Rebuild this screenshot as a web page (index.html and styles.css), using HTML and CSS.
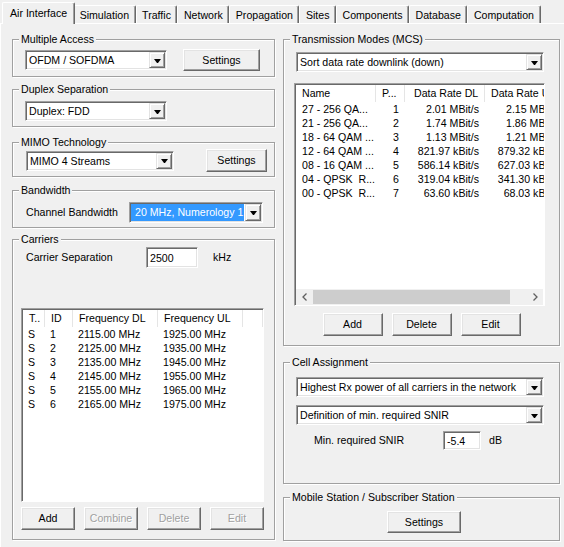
FILE: index.html
```html
<!DOCTYPE html>
<html lang="en">
 <head>
   <title>Air Interface</title>
   <meta charset="utf-8">
   <link rel="stylesheet" href="styles.css">
 </head>
 <body>
  <div class="tabs">
    <div class="tab active">Air Interface</div>
    <div class="tab">Simulation</div>
    <div class="tab">Traffic</div>
    <div class="tab">Network</div>
    <div class="tab">Propagation</div>
    <div class="tab">Sites</div>
    <div class="tab">Components</div>
    <div class="tab">Database</div>
    <div class="tab">Computation</div>
  </div>

  <div class="page">
    <div class="col col-left">

      <div class="group g-access">
        <div class="group-title">Multiple Access</div>
        <div class="row row-access">
          <div class="combo w-access"><span class="combo-text">OFDM / SOFDMA</span><span class="combo-btn"><i></i></span></div>
          <button class="btn btn-access">Settings</button>
        </div>
      </div>

      <div class="group g-duplex">
        <div class="group-title">Duplex Separation</div>
        <div class="row row-duplex">
          <div class="combo w-access"><span class="combo-text">Duplex: FDD</span><span class="combo-btn"><i></i></span></div>
        </div>
      </div>

      <div class="group g-mimo">
        <div class="group-title">MIMO Technology</div>
        <div class="row row-mimo">
          <div class="combo w-mimo"><span class="combo-text">MIMO 4 Streams</span><span class="combo-btn"><i></i></span></div>
          <button class="btn btn-mimo">Settings</button>
        </div>
      </div>

      <div class="group g-band">
        <div class="group-title">Bandwidth</div>
        <div class="row row-band">
          <span class="label w-band">Channel Bandwidth</span>
          <div class="combo w-bandcombo"><span class="combo-text selected">20 MHz, Numerology 1</span><span class="combo-btn"><i></i></span></div>
        </div>
      </div>

      <div class="group g-carriers">
        <div class="group-title">Carriers</div>
        <div class="row row-sep">
          <span class="label w-sep">Carrier Separation</span>
          <div class="edit w-sepedit">2500</div>
          <span class="unit">kHz</span>
        </div>

        <div class="list list-carriers">
          <div class="list-head">
            <span>T..</span><span>ID</span><span>Frequency DL</span><span>Frequency UL</span><span></span>
          </div>
          <div class="list-row"><span>S</span><span>1</span><span>2115.00 MHz</span><span>1925.00 MHz</span></div>
          <div class="list-row"><span>S</span><span>2</span><span>2125.00 MHz</span><span>1935.00 MHz</span></div>
          <div class="list-row"><span>S</span><span>3</span><span>2135.00 MHz</span><span>1945.00 MHz</span></div>
          <div class="list-row"><span>S</span><span>4</span><span>2145.00 MHz</span><span>1955.00 MHz</span></div>
          <div class="list-row"><span>S</span><span>5</span><span>2155.00 MHz</span><span>1965.00 MHz</span></div>
          <div class="list-row"><span>S</span><span>6</span><span>2165.00 MHz</span><span>1975.00 MHz</span></div>
        </div>

        <div class="row row-carrier-btns">
          <button class="btn btn-small">Add</button>
          <button class="btn btn-small disabled">Combine</button>
          <button class="btn btn-small disabled">Delete</button>
          <button class="btn btn-small disabled">Edit</button>
        </div>
      </div>

    </div>

    <div class="col col-right">

      <div class="group g-modes">
        <div class="group-title">Transmission Modes (MCS)</div>
        <div class="row row-sort">
          <div class="combo w-wide"><span class="combo-text">Sort data rate downlink (down)</span><span class="combo-btn"><i></i></span></div>
        </div>

        <div class="list list-modes">
          <div class="list-body">
            <div class="list-head">
              <span>Name</span><span>P...</span><span class="r">Data Rate DL</span><span>Data Rate UL</span>
            </div>
            <div class="list-row"><span>27 - 256 QA...</span><span class="r">1</span><span class="r">2.01 MBit/s</span><span class="r">2.15 MBit/s</span></div>
            <div class="list-row"><span>21 - 256 QA...</span><span class="r">2</span><span class="r">1.74 MBit/s</span><span class="r">1.86 MBit/s</span></div>
            <div class="list-row"><span>18 - 64 QAM ...</span><span class="r">3</span><span class="r">1.13 MBit/s</span><span class="r">1.21 MBit/s</span></div>
            <div class="list-row"><span>12 - 64 QAM ...</span><span class="r">4</span><span class="r">821.97 kBit/s</span><span class="r">879.32 kBit/s</span></div>
            <div class="list-row"><span>08 - 16 QAM ...</span><span class="r">5</span><span class="r">586.14 kBit/s</span><span class="r">627.03 kBit/s</span></div>
            <div class="list-row"><span>04 - QPSK&nbsp; R...</span><span class="r">6</span><span class="r">319.04 kBit/s</span><span class="r">341.30 kBit/s</span></div>
            <div class="list-row"><span>00 - QPSK&nbsp; R...</span><span class="r">7</span><span class="r">63.60 kBit/s</span><span class="r">68.03 kBit/s</span></div>
          </div>
          <div class="hscroll">
            <span class="arrow"><svg width="8" height="8" viewBox="0 0 8 8"><path d="M5.5 0.5 L2 4 L5.5 7.5" fill="none" stroke="#606060" stroke-width="1.3"/></svg></span>
            <span class="track"><span class="thumb"></span></span>
            <span class="arrow"><svg width="8" height="8" viewBox="0 0 8 8"><path d="M2.5 0.5 L6 4 L2.5 7.5" fill="none" stroke="#606060" stroke-width="1.3"/></svg></span>
          </div>
        </div>

        <div class="row row-mode-btns">
          <button class="btn btn-mode">Add</button>
          <button class="btn btn-mode">Delete</button>
          <button class="btn btn-mode">Edit</button>
        </div>
      </div>

      <div class="group g-cell">
        <div class="group-title">Cell Assignment</div>
        <div class="row row-cell1">
          <div class="combo w-wide"><span class="combo-text">Highest Rx power of all carriers in the network</span><span class="combo-btn"><i></i></span></div>
        </div>
        <div class="row row-cell2">
          <div class="combo w-wide"><span class="combo-text">Definition of min. required SNIR</span><span class="combo-btn"><i></i></span></div>
        </div>
        <div class="row row-snir">
          <span class="label w-snir">Min. required SNIR</span>
          <div class="edit w-snirEdit">-5.4</div>
          <span class="unit unit-db">dB</span>
        </div>
      </div>

      <div class="group g-mobile">
        <div class="group-title">Mobile Station / Subscriber Station</div>
        <div class="row row-mobile">
          <button class="btn btn-mobile">Settings</button>
        </div>
      </div>

    </div>
  </div>
 </body>
</html>
```

FILE: styles.css
```css
* {
  box-sizing: border-box;
}

html, body {
  margin: 0;
  padding: 0;
}

body {
  width: 564px;
  height: 547px;
  overflow: hidden;
  background-color: #f0f0f0;
  font-family: "Liberation Sans", Arial, sans-serif;
  font-size: 10.6px;
  line-height: 13px;
  color: #000;
}

/* tab strip */
.tabs {
  display: flex;
  align-items: flex-end;
  height: 23px;
  padding-left: 4px;
}

.tab {
  height: 18px;
  padding: 3px 5.5px 0;
  border-top: 1px solid #fff;
  border-left: 1px solid #fff;
  border-right: 1px solid #696969;
  box-shadow: inset -1px 0 #a0a0a0;
  border-radius: 2px 2px 0 0;
  white-space: nowrap;
}

.tab.active {
  position: relative;
  height: 22px;
  margin: 0 -2px -1px -2px;
  padding: 4px 7px 0;
  background-color: #f0f0f0;
}

/* page */
.page {
  display: flex;
  gap: 8px;
  height: 524px;
  padding: 15px 0 0 11px;
  border-top: 1px solid #fff;
  border-left: 1px solid #fff;
}

.col {
  display: flex;
  flex-direction: column;
}

.col-left {
  width: 263px;
}

.col-right {
  width: 277px;
}

.group {
  border: 1px solid #a0a0a0;
  box-shadow: inset 1px 1px #fff, 1px 1px #fff;
}

.group-title {
  display: table;
  margin: -7px 0 0 6px;
  padding: 0 2px;
  background-color: #f0f0f0;
  white-space: nowrap;
}

.g-access { height: 38px; }
.g-duplex { height: 38px; margin-top: 12px; }
.g-mimo { height: 35px; margin-top: 15px; }
.g-band { height: 38px; margin-top: 13px; }
.g-carriers { height: 301px; margin-top: 11px; }

.g-modes { height: 307px; }
.g-cell { height: 122px; margin-top: 16px; }
.g-mobile { height: 44px; margin-top: 13px; }

.row {
  display: flex;
  align-items: center;
}

.row-access { margin-top: 3px; padding-left: 12px; height: 22px; }
.row-duplex { margin-top: 5px; padding-left: 12px; }
.row-mimo { margin-top: 0; padding-left: 13px; height: 23px; }
.row-band { margin-top: 5px; padding-left: 13px; }
.row-sep { margin-top: 1px; padding-left: 13px; }
.row-carrier-btns { margin: 5px 0 0 8px; width: 243px; justify-content: space-between; }

.row-sort { margin-top: 6px; padding-left: 12px; }
.row-mode-btns { margin-top: 7px; justify-content: center; gap: 9px; }
.row-cell1 { margin-top: 8px; padding-left: 12px; }
.row-cell2 { margin-top: 8px; padding-left: 12px; }
.row-snir { margin-top: 6px; padding-left: 30px; }
.row-mobile { margin-top: 7px; padding-left: 103px; }

.label {
  white-space: nowrap;
}

.w-band { width: 103px; }
.w-sep { width: 120px; }
.w-snir { width: 129px; }

.unit { margin-left: 15px; }
.unit-db { margin-left: 8px; }

/* combo box */
.combo {
  display: flex;
  height: 20px;
  padding: 1px;
  background-color: #fff;
  border: 1px solid;
  border-color: #a0a0a0 #fff #fff #a0a0a0;
  box-shadow: inset 1px 1px #696969, inset -1px -1px #e3e3e3;
}

.combo-text {
  flex: 1;
  overflow: hidden;
  white-space: nowrap;
  padding-left: 2px;
  line-height: 16px;
}

.combo-text.selected {
  background-color: #3399ff;
  color: #fff;
  padding-left: 4px;
  margin-right: 1px;
}

.combo-btn {
  display: flex;
  align-items: center;
  justify-content: center;
  width: 16px;
  background-color: #f0f0f0;
  border: 1px solid;
  border-color: #e3e3e3 #696969 #696969 #e3e3e3;
  box-shadow: inset 1px 1px #fff, inset -1px -1px #a0a0a0;
}

.combo-btn i {
  width: 7px;
  height: 0;
  border-top: 4px solid #000;
  border-left: 3.5px solid transparent;
  border-right: 3.5px solid transparent;
  margin-top: 1px;
}

.w-access { width: 142px; }
.w-mimo { width: 148px; }
.w-bandcombo { width: 134px; height: 21px; }
.w-wide { width: 248px; }

/* edit field */
.edit {
  height: 21px;
  padding: 2px 0 0 3px;
  line-height: 16px;
  background-color: #fff;
  border: 1px solid;
  border-color: #a0a0a0 #fff #fff #a0a0a0;
  box-shadow: inset 1px 1px #696969, inset -1px -1px #e3e3e3;
}

.w-sepedit { width: 52px; }
.w-snirEdit { width: 38px; height: 19px; padding-top: 1px; }

/* buttons */
.btn {
  height: 23px;
  padding: 0;
  font: inherit;
  color: #000;
  background-color: #f0f0f0;
  border: 1px solid;
  border-color: #fff #696969 #696969 #fff;
  box-shadow: inset -1px -1px #a0a0a0, inset 1px 1px #e3e3e3;
  border-radius: 0;
}

.btn.disabled {
  color: #a0a0a0;
  text-shadow: 1px 1px #fff;
}

.btn-access { width: 77px; margin-left: 16px; height: 22px; }
.btn-mimo { width: 61px; margin-left: 32px; }
.btn-small { width: 54px; }
.btn-mode { width: 60px; }
.btn-mobile { width: 74px; height: 22px; }

/* list views */
.list {
  display: flex;
  flex-direction: column;
  overflow: hidden;
  padding: 1px 0 0 1px;
  background-color: #fff;
  border: 1px solid;
  border-color: #a0a0a0 #fff #fff #a0a0a0;
  box-shadow: inset 1px 1px #696969;
}

.list-carriers {
  width: 243px;
  height: 194px;
  margin: 40px 0 0 8px;
}

.list-modes {
  width: 251px;
  height: 223px;
  margin: 11px 0 0 10px;
}

.list-body {
  flex: 1;
  overflow: hidden;
}

.list-head,
.list-row {
  display: grid;
  white-space: nowrap;
}

.list-carriers .list-head,
.list-carriers .list-row {
  grid-template-columns: 22px 28px 85px 85px 1fr;
}

.list-modes .list-head,
.list-modes .list-row {
  grid-template-columns: 80px 29px 80px 80px;
  width: 269px;
}

.list-head {
  height: 17px;
  line-height: 17px;
}

.list-head span {
  overflow: hidden;
  padding-left: 6px;
  border-right: 1px solid #e5e5e5;
}

.list-modes .list-head span.r {
  padding: 0 0 0 9px;
}

.list-row {
  height: 14px;
  line-height: 14px;
}

.list-row span {
  overflow: hidden;
  padding: 0 6px;
}

.list-row span.r {
  text-align: right;
}

.list-carriers .list-row span {
  padding: 0 0 0 5px;
}

/* horizontal scroll bar */
.hscroll {
  display: flex;
  height: 16px;
  margin-right: 1px;
  background-color: #f0f0f0;
}

.arrow {
  display: flex;
  align-items: center;
  justify-content: center;
  width: 17px;
}

.track {
  flex: 1;
  display: flex;
}

.thumb {
  width: 197px;
  margin: 1px 0;
  background-color: #cdcdcd;
}
```
